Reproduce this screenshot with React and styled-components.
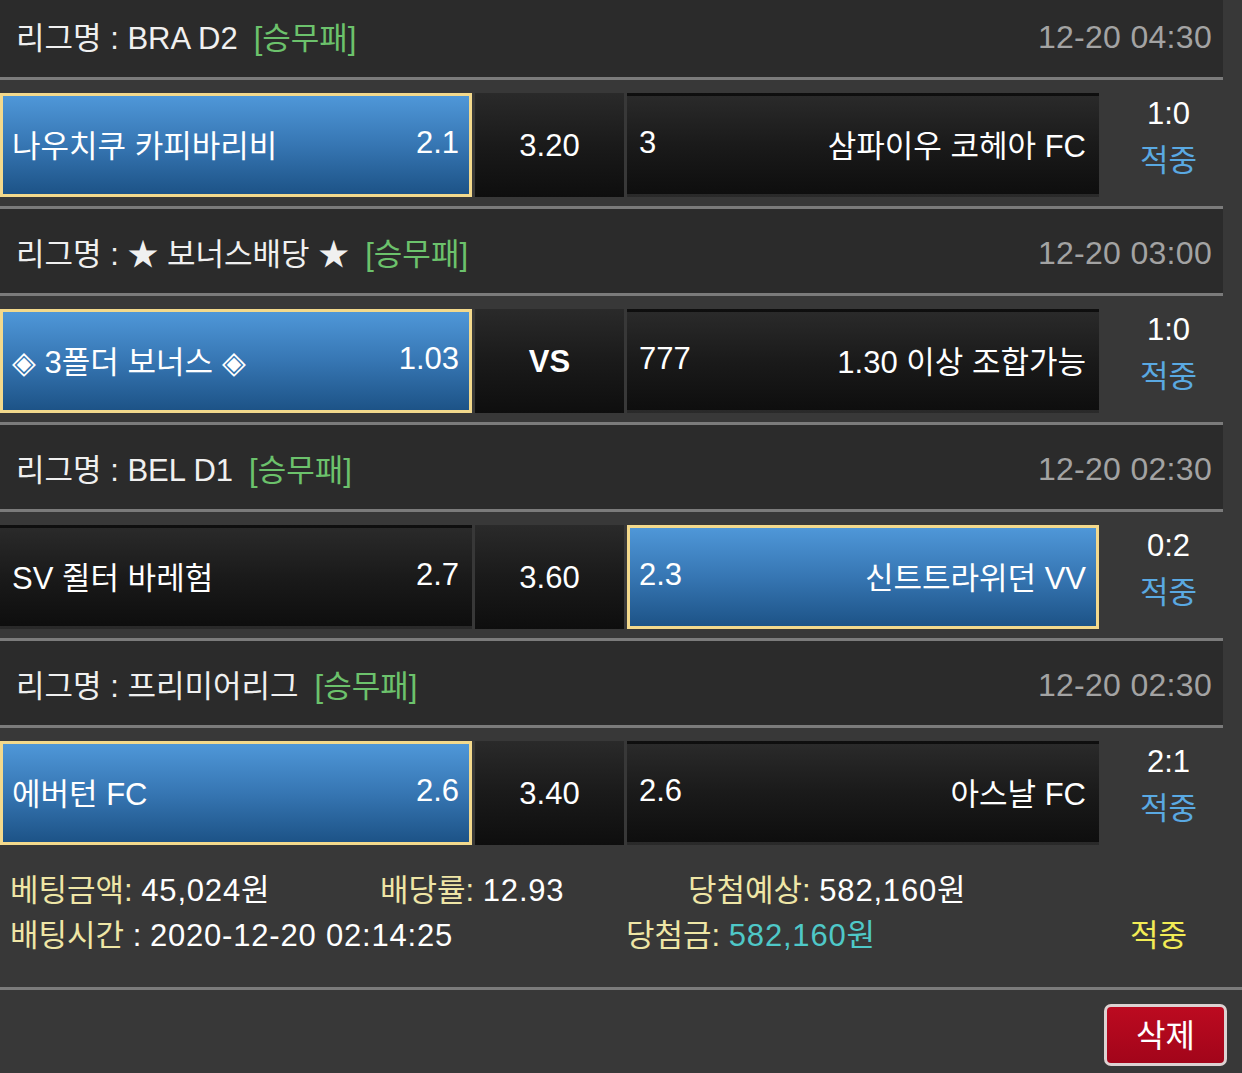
import styled, { createGlobalStyle } from "styled-components";

const GlobalStyle = createGlobalStyle`
  body {
    margin: 0;
    background: #383838;
    font-family: "Liberation Sans", "Noto Sans CJK KR", sans-serif;
    color: #fff;
  }
`;

const matches = [
  {
    league: "BRA D2",
    time: "12-20 04:30",
    home: "나우치쿠 카피바리비",
    homeOdds: "2.1",
    draw: "3.20",
    awayOdds: "3",
    away: "삼파이우 코헤아 FC",
    pick: "home",
    score: "1:0",
  },
  {
    league: "★ 보너스배당 ★",
    time: "12-20 03:00",
    home: "◈ 3폴더 보너스 ◈",
    homeOdds: "1.03",
    draw: "VS",
    awayOdds: "777",
    away: "1.30 이상 조합가능",
    pick: "home",
    score: "1:0",
  },
  {
    league: "BEL D1",
    time: "12-20 02:30",
    home: "SV 쥘터 바레험",
    homeOdds: "2.7",
    draw: "3.60",
    awayOdds: "2.3",
    away: "신트트라위던 VV",
    pick: "away",
    score: "0:2",
  },
  {
    league: "프리미어리그",
    time: "12-20 02:30",
    home: "에버턴 FC",
    homeOdds: "2.6",
    draw: "3.40",
    awayOdds: "2.6",
    away: "아스날 FC",
    pick: "home",
    score: "2:1",
  },
];

function App() {
  return (
    <>
      <GlobalStyle />
      <Board>
        {matches.map((m, i) => (
          <section key={i}>
            <LeagueHeader>
              <LeagueName>
                리그명 : {m.league}
                <Tag>[승무패]</Tag>
              </LeagueName>
              <KickOff>{m.time}</KickOff>
            </LeagueHeader>
            <MatchRow $last={i === matches.length - 1}>
              <PickCell $picked={m.pick === "home"}>
                <span>{m.home}</span>
                <span>{m.homeOdds}</span>
              </PickCell>
              <DrawCell $bold={m.draw === "VS"}>{m.draw}</DrawCell>
              <PickCell $picked={m.pick === "away"}>
                <span>{m.awayOdds}</span>
                <span>{m.away}</span>
              </PickCell>
              <ScoreCell>
                <span>{m.score}</span>
                <Hit>적중</Hit>
              </ScoreCell>
            </MatchRow>
          </section>
        ))}
      </Board>

      <Summary>
        <SummaryLine $cols="370px 308px auto">
          <span>
            <Label>베팅금액:</Label> <Value>45,024</Value>원
          </span>
          <span>
            <Label>배당률:</Label> <Value>12.93</Value>
          </span>
          <span>
            <Label>당첨예상:</Label> <Value>582,160</Value>원
          </span>
        </SummaryLine>
        <SummaryLine $cols="616px 504px auto">
          <span>
            <Label>배팅시간</Label> : <Value>2020-12-20 02:14:25</Value>
          </span>
          <span>
            <Label>당첨금:</Label>{" "}
            <Prize>
              <Value>582,160</Value>원
            </Prize>
          </span>
          <Result>적중</Result>
        </SummaryLine>
      </Summary>

      <Footer>
        <DeleteButton>삭제</DeleteButton>
      </Footer>
    </>
  );
}

const Board = styled.div`
  width: 1223px;
  margin-top: -7px;
`;

const LeagueHeader = styled.div`
  height: 84px;
  background: #2b2b2b;
  border-bottom: 3px solid #7b7b7b;
  display: flex;
  align-items: center;
  justify-content: space-between;
  padding: 0 11px 0 16px;
  font-size: 31px;
`;

const LeagueName = styled.div`
  color: #f0f0f0;
  white-space: nowrap;
`;

const Tag = styled.span`
  color: #6cc26c;
  margin-left: 16px;
`;

const KickOff = styled.div`
  color: #a3a3a3;
  font-size: 32px;
  letter-spacing: 0.3px;
  padding-top: 4px;
`;

const MatchRow = styled.div`
  display: flex;
  gap: 3px;
  padding: 13px 0 9px;
  border-bottom: ${(p) => (p.$last ? "none" : "3px solid #7b7b7b")};
`;

const cellBase = `
  box-sizing: border-box;
  height: 104px;
  display: flex;
  align-items: center;
  font-size: 31px;
  color: #fff;
  white-space: nowrap;
`;

const darkFill = "linear-gradient(to bottom, #2a2a2a 0%, #1a1a1a 50%, #0e0e0e 100%)";

const PickCell = styled.div`
  ${cellBase}
  width: 472px;
  justify-content: space-between;
  padding: 0 10px 4px 9px;
  border: 3px solid ${(p) => (p.$picked ? "#f3d98c" : "transparent")};
  background: ${(p) =>
    p.$picked
      ? "linear-gradient(to bottom, #4f97d8 0%, #3676b3 50%, #1d5387 100%)"
      : darkFill};
`;

const DrawCell = styled.div`
  ${cellBase}
  width: 149px;
  justify-content: center;
  padding-top: 2px;
  font-weight: ${(p) => (p.$bold ? 700 : 400)};
  background: ${darkFill};
`;

const ScoreCell = styled.div`
  flex: 1;
  display: flex;
  flex-direction: column;
  align-items: center;
  gap: 5px;
  padding-left: 12px;
  font-size: 31px;
  line-height: 42px;
  color: #fff;
`;

const Hit = styled.span`
  color: #5aa9e2;
`;

const Summary = styled.div`
  padding: 14px 10px 29px;
  border-bottom: 3px solid #7b7b7b;
  font-size: 31px;
  line-height: 45px;
  color: #fff;
`;

const SummaryLine = styled.div`
  display: grid;
  grid-template-columns: ${(p) => p.$cols};
  white-space: nowrap;
`;

const Label = styled.span`
  color: #efe6a6;
`;

const Value = styled.span`
  letter-spacing: 0.8px;
`;

const Prize = styled.span`
  color: #4fc8c8;
`;

const Result = styled.span`
  color: #f2ec55;
`;

const Footer = styled.div`
  display: flex;
  justify-content: flex-end;
  padding: 14px 15px 0;
`;

const DeleteButton = styled.button`
  width: 123px;
  height: 62px;
  border: 3px solid #dcd2d2;
  border-radius: 7px;
  background: linear-gradient(to bottom, #bc0a20, #a2051a);
  color: #fff;
  font-family: "Liberation Sans", "Noto Sans CJK KR", sans-serif;
  font-size: 32px;
  padding: 0 0 4px;
  cursor: pointer;
`;

export default App;
